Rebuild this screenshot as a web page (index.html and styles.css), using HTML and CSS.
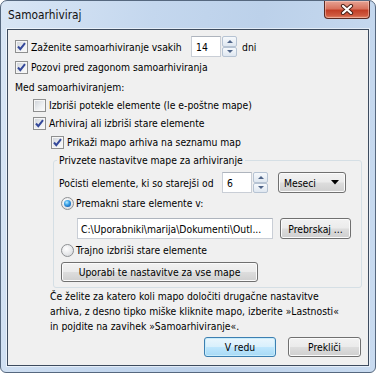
FILE: index.html
```html
<!DOCTYPE html>
<html lang="sl">
<head>
  <meta charset="UTF-8" />
  <title>Samoarhiviraj</title>
  <link rel="stylesheet" href="styles.css">
</head>
<body>

  <div class="window">
    <div class="titlebar">
      <span class="title">Samoarhiviraj</span>
      <button class="close-btn">
        <svg width="14" height="11" viewBox="0 0 14 11">
          <path d="M3 2 L11 9 M11 2 L3 9" stroke="#4b2219" stroke-width="4.2" stroke-linecap="round"/>
          <path d="M3 2 L11 9 M11 2 L3 9" stroke="#fff" stroke-width="2.2" stroke-linecap="round"/>
        </svg>
      </button>
    </div>

    <div class="client">
      <!-- top options -->
      <div class="row first">
        <span class="check on"><svg width="11" height="11" viewBox="0 0 11 11"><path d="M2 5.5 L4.3 8.2 L9 2.2" fill="none" stroke="#34489a" stroke-width="2"/></svg></span>
        <span class="label every">Zaženite samoarhiviranje vsakih</span>
        <span class="field spin-field">14</span>
        <span class="spinner"><span class="spin-up"><i class="tri up"></i></span><span class="spin-down"><i class="tri down"></i></span></span>
        <span class="label unit">dni</span>
      </div>

      <div class="row r2">
        <span class="check on"><svg width="11" height="11" viewBox="0 0 11 11"><path d="M2 5.5 L4.3 8.2 L9 2.2" fill="none" stroke="#34489a" stroke-width="2"/></svg></span>
        <span class="label">Pozovi pred zagonom samoarhiviranja</span>
      </div>

      <div class="row r3">
        <span>Med samoarhiviranjem:</span>
      </div>

      <div class="row r4 indent1">
        <span class="check"></span>
        <span class="label">Izbriši potekle elemente (le e-poštne mape)</span>
      </div>

      <div class="row r4 indent1">
        <span class="check on"><svg width="11" height="11" viewBox="0 0 11 11"><path d="M2 5.5 L4.3 8.2 L9 2.2" fill="none" stroke="#34489a" stroke-width="2"/></svg></span>
        <span class="label">Arhiviraj ali izbriši stare elemente</span>
      </div>

      <div class="row r6 indent2">
        <span class="check on"><svg width="11" height="11" viewBox="0 0 11 11"><path d="M2 5.5 L4.3 8.2 L9 2.2" fill="none" stroke="#34489a" stroke-width="2"/></svg></span>
        <span class="label">Prikaži mapo arhiva na seznamu map</span>
      </div>

      <!-- folder defaults -->
      <div class="group">
        <span class="group-title">Privzete nastavitve mape za arhiviranje</span>

        <div class="row clean-row">
          <span class="clean-label">Počisti elemente, ki so starejši od</span>
          <span class="field spin-field">6</span>
          <span class="spinner"><span class="spin-up"><i class="tri up"></i></span><span class="spin-down"><i class="tri down"></i></span></span>
          <span class="btn combo">Meseci <svg width="8" height="5" viewBox="0 0 8 5"><path d="M0 0 H8 L4 4.5 Z" fill="#000"/></svg></span>
        </div>

        <div class="row radio-row">
          <span class="radio on"></span>
          <span class="label">Premakni stare elemente v:</span>
        </div>

        <div class="row path-row">
          <span class="field path-field">C:\Uporabniki\marija\Dokumenti\Outl...</span>
          <button class="btn browse">Prebrskaj ...</button>
        </div>

        <div class="row radio-row r-del">
          <span class="radio"></span>
          <span class="label">Trajno izbriši stare elemente</span>
        </div>

        <div class="row apply-row">
          <button class="btn apply">Uporabi te nastavitve za vse mape</button>
        </div>
      </div>

      <p class="note">Če želite za katero koli mapo določiti drugačne nastavitve<br>arhiva, z desno tipko miške kliknite mapo, izberite »Lastnosti«<br>in pojdite na zavihek »Samoarhiviranje«.</p>

      <div class="actions">
        <button class="btn default ok">V redu</button>
        <button class="btn cancel">Prekliči</button>
      </div>
    </div>
  </div>

</body>
</html>
```

FILE: styles.css
```css
body {
  margin: 0;
  background-color: #fff;
  font-family: "DejaVu Sans Condensed", "DejaVu Sans", sans-serif;
  font-stretch: condensed;
  font-size: 10.3px;
  color: #000;
}

.window {
  width: 376px;
  height: 373px;
  box-sizing: border-box;
  border: 1px solid #56687f;
  border-radius: 7px 7px 6px 6px;
  background: linear-gradient(100deg, #d9e6f5 0%, #c4d7ee 35%, #bcd1ea 60%, #c9dbf0 100%);
  display: flex;
  flex-direction: column;
}

.titlebar {
  height: 28px;
  display: flex;
  align-items: flex-start;
  padding-left: 7px;
  padding-right: 5px;
}

.title {
  margin-top: 7px;
  line-height: 14px;
  font-size: 11.8px;
  color: #111;
}

.close-btn {
  margin-left: auto;
  width: 46px;
  height: 18px;
  padding: 0;
  border: 1px solid #5b2a22;
  border-top: none;
  border-radius: 0 0 4px 4px;
  background: linear-gradient(#e6a394 0%, #d8735e 45%, #c23f27 55%, #cf5a40 85%, #e28a6c 100%);
  box-shadow: inset 0 0 0 1px rgba(255, 220, 210, 0.45);
  display: flex;
  align-items: center;
  justify-content: center;
}

.client {
  flex: 1;
  margin: 0 6px 6px 6px;
  border: 1px solid #3d4b5e;
  box-shadow: 0 0 0 1px rgba(255, 255, 255, 0.55);
  background-color: #f0f0f0;
  padding: 6px 6px 0 7px;
  display: flex;
  flex-direction: column;
}

.row {
  display: flex;
  align-items: center;
  height: 14px;
  white-space: nowrap;
}

.row.first {
  height: 21px;
}

.r2 { margin-top: 3px; }
.r3 { margin-top: 6px; }
.r4 { margin-top: 4px; }
.r6 { margin-top: 5px; }

.indent1 { padding-left: 18px; }
.indent2 { padding-left: 36px; }

.check {
  width: 13px;
  height: 13px;
  box-sizing: border-box;
  flex-shrink: 0;
  border: 1px solid #8e8f8f;
  background: linear-gradient(135deg, #cdd1d7 0%, #eef0f2 60%, #fafafa 100%);
  box-shadow: inset 0 0 0 1px #f6f6f6;
  display: flex;
  align-items: center;
  justify-content: center;
}

.check + .label {
  margin-left: 3px;
}

.label.every {
  width: 160px;
}

.label.unit {
  margin-left: 5px;
}

.field {
  height: 21px;
  box-sizing: border-box;
  background-color: #fff;
  border: 1px solid #c9ced6;
  border-top-color: #aeb4bd;
  display: flex;
  align-items: center;
  padding-left: 4px;
}

.spin-field {
  width: 30px;
}

.spinner {
  width: 15px;
  height: 21px;
  margin-left: 1px;
  display: flex;
  flex-direction: column;
}

.spin-up,
.spin-down {
  flex: 1;
  border: 1px solid #b6c3d3;
  border-radius: 2px;
  background: linear-gradient(#f6f9fc, #dfe7f0);
  display: flex;
  align-items: center;
  justify-content: center;
}

.tri {
  width: 0;
  height: 0;
  border-left: 3px solid transparent;
  border-right: 3px solid transparent;
}

.tri.up {
  border-bottom: 3px solid #4f6488;
}

.tri.down {
  border-top: 3px solid #4f6488;
}

.group {
  margin: 11px 0 0 38px;
  border: 1px solid #d5dfe5;
  border-radius: 3px;
  padding: 0 6px 5px 4px;
  display: flex;
  flex-direction: column;
}

.group-title {
  align-self: flex-start;
  margin: -8px 0 0 -1px;
  padding: 0 2px;
  line-height: 14px;
  background-color: #f0f0f0;
}

.clean-row {
  height: 21px;
  margin-top: 5px;
}

.clean-label {
  width: 164px;
  padding-left: 1px;
  box-sizing: border-box;
}

.btn {
  height: 21px;
  box-sizing: border-box;
  padding: 0;
  border: 1px solid #707070;
  border-radius: 3px;
  background: linear-gradient(#f2f2f2 0%, #ebebeb 48%, #dddddd 52%, #cfcfcf 100%);
  box-shadow: inset 0 0 0 1px #fbfbfb;
  font: inherit;
  color: #000;
  display: flex;
  align-items: center;
  justify-content: center;
}

.combo {
  width: 68px;
  margin-left: 10px;
  justify-content: space-between;
  padding: 0 6px 0 5px;
}

.radio-row {
  margin-top: 3px;
  padding-left: 3px;
}

.r-del {
  margin-top: 4px;
}

.radio {
  width: 13px;
  height: 13px;
  box-sizing: border-box;
  flex-shrink: 0;
  border-radius: 50%;
  border: 1px solid #8e9093;
  background: radial-gradient(circle at 40% 35%, #ffffff 0%, #e9eaec 50%, #cfd2d6 100%);
  display: flex;
  align-items: center;
  justify-content: center;
}

.radio.on::after {
  content: "";
  width: 7px;
  height: 7px;
  border-radius: 50%;
  background: radial-gradient(circle at 40% 35%, #b8ecff 0%, #3ba2e8 40%, #135fb2 80%, #0c3f84 100%);
}

.radio + .label {
  margin-left: 2px;
}

.path-row {
  height: 21px;
  margin-top: 8px;
  padding-left: 19px;
}

.path-field {
  width: 196px;
  overflow: hidden;
  padding-left: 3px;
}

.browse {
  width: 71px;
  margin-left: 7px;
}

.apply-row {
  height: 20px;
  margin-top: 5px;
}

.apply {
  width: 197px;
  height: 20px;
  margin-left: 3px;
}

.note {
  margin: 1px 0 0 35px;
  line-height: 15px;
  white-space: nowrap;
}

.actions {
  display: flex;
  justify-content: flex-end;
  gap: 12px;
  margin: 3px 1px 0 0;
}

.actions .btn {
  height: 20px;
}

.ok {
  width: 72px;
}

.cancel {
  width: 73px;
}

.btn.default {
  border-color: #3c7fb1;
  background: linear-gradient(#eaf6fd 0%, #d9f0fc 48%, #bee6fd 52%, #a7d9f5 100%);
  box-shadow: inset 0 0 0 1px #c8ecfb;
}
```
